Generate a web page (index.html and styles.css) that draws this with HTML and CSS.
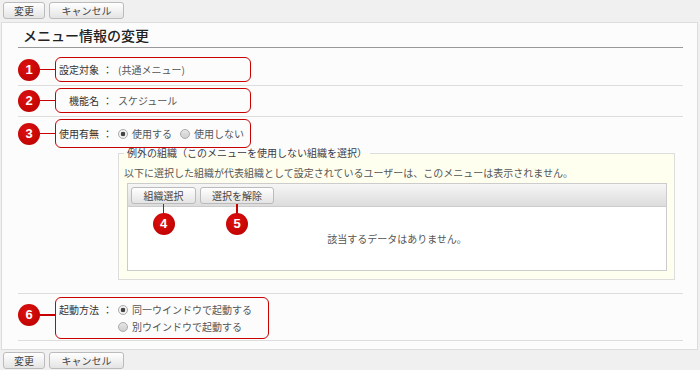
FILE: index.html
```html
<!DOCTYPE html>
<html lang="ja">

<head>
    <meta charset="UTF-8" />
    <meta name="viewport" content="width=device-width, initial-scale=1.0" />
    <title>メニュー情報の変更</title>

    <link rel="stylesheet" href="styles.css">
</head>

<body>

    <div class="toolbar">
        <button class="btn btn-save">変更</button>
        <button class="btn btn-cancel">キャンセル</button>
    </div>

    <div class="panel">
        <h2 class="panel-title">メニュー情報の変更</h2>

        <div class="row row-target">
            <div class="line">
                <span class="num">1</span><span class="leader"></span>
                <div class="mark">
                    <span class="label">設定対象</span><span class="colon">：</span>
                    <span class="value">(共通メニュー)</span>
                </div>
            </div>
        </div>

        <div class="row row-name">
            <div class="line">
                <span class="num">2</span><span class="leader"></span>
                <div class="mark">
                    <span class="label">機能名</span><span class="colon">：</span>
                    <span class="value">スケジュール</span>
                </div>
            </div>
        </div>

        <div class="row row-use">
            <div class="line">
                <span class="num">3</span><span class="leader"></span>
                <div class="mark mark-tall">
                    <span class="label">使用有無</span><span class="colon">：</span>
                    <label class="opt"><input type="radio" name="use" checked>使用する</label>
                    <label class="opt"><input type="radio" name="use">使用しない</label>
                </div>
            </div>

            <fieldset class="exclude">
                <legend>例外の組織（このメニューを使用しない組織を選択）</legend>
                <p class="exclude-note">以下に選択した組織が代表組織として設定されているユーザーは、このメニューは表示されません。</p>
                <div class="org-table">
                    <div class="org-head">
                        <div class="pick">
                            <button class="btn btn-pick">組織選択</button>
                            <span class="stem"></span>
                            <span class="num num-below">4</span>
                        </div>
                        <div class="pick">
                            <button class="btn btn-clear">選択を解除</button>
                            <span class="stem"></span>
                            <span class="num num-below">5</span>
                        </div>
                    </div>
                    <div class="org-body">該当するデータはありません。</div>
                </div>
            </fieldset>
        </div>

        <div class="row row-launch">
            <div class="line">
                <span class="num num-high">6</span><span class="leader leader-high"></span>
                <div class="mark mark-wide">
                    <span class="label">起動方法</span><span class="colon">：</span>
                    <div class="opts">
                        <label class="opt"><input type="radio" name="launch" checked>同一ウインドウで起動する</label>
                        <label class="opt"><input type="radio" name="launch">別ウインドウで起動する</label>
                    </div>
                </div>
            </div>
        </div>
    </div>

    <div class="toolbar toolbar-bottom">
        <button class="btn btn-save">変更</button>
        <button class="btn btn-cancel">キャンセル</button>
    </div>

</body>

</html>
```

FILE: styles.css
```css
:root {
    --bg: #f0f0f0;
    --panel: #fcfcfc;
    --line: #dddddd;
    --mark: #c80000;
    --text: #333;
    --soft: #555;
}

* {
    box-sizing: border-box;
}

body {
    margin: 0;
    background: var(--bg);
    color: var(--text);
    font-family: "Noto Sans CJK JP", sans-serif;
    font-size: 10px;
    line-height: 14px;
}

.toolbar {
    display: flex;
    gap: 4px;
    padding: 2px 3px 3px;
}

.toolbar-bottom {
    padding-top: 2px;
}

.btn {
    height: 17px;
    padding: 0;
    border: 1px solid #bbb;
    border-radius: 3px;
    background: linear-gradient(#ffffff, #e4e4e4);
    color: #444;
    font: inherit;
    line-height: 15px;
    cursor: pointer;
}

.btn-save {
    width: 42px;
}

.btn-cancel {
    width: 75px;
}

.panel {
    margin: 0 2px 0 1px;
    background: var(--panel);
    border: 1px solid var(--line);
    padding: 0 14px 8px 16px;
}

.panel-title {
    margin: 0;
    height: 25px;
    padding-left: 5px;
    border-bottom: 1px solid #999;
    font-size: 14px;
    font-weight: 500;
    line-height: 24px;
    color: #222;
}

.row {
    border-bottom: 1px solid var(--line);
}

.row-target {
    padding: 9px 0 3px;
}

.row-name {
    padding: 2px 0 3px;
}

.row-use {
    padding: 2px 0 13px;
}

.row-launch {
    padding: 3px 0 1px;
}

.line {
    display: flex;
    align-items: center;
}

/* annotation markers */
.num {
    display: flex;
    align-items: center;
    justify-content: center;
    width: 22px;
    height: 22px;
    border-radius: 50%;
    background: radial-gradient(circle at 40% 35%, #dd1010, #b80000);
    color: #fff;
    font-family: "Liberation Sans", sans-serif;
    font-size: 13px;
    font-weight: bold;
    flex-shrink: 0;
}

.leader {
    width: 15px;
    height: 1.5px;
    background: var(--mark);
}

.num-high,
.leader-high {
    margin-bottom: 6px;
}

.mark {
    display: flex;
    align-items: center;
    width: 196px;
    height: 25px;
    border: 1.5px solid var(--mark);
    border-radius: 6px;
    padding-left: 1px;
}

.mark-tall {
    height: 29px;
}

.mark-wide {
    width: 214px;
    height: 42px;
    align-items: flex-start;
    padding-top: 3px;
}

.mark-wide .label,
.mark-wide .colon {
    line-height: 17px;
}

.label {
    width: 42px;
    text-align: right;
    white-space: nowrap;
    color: var(--text);
}

.colon {
    width: 17px;
    text-align: center;
    color: var(--text);
}

.value {
    margin-left: 2px;
    color: var(--soft);
}

.opt {
    display: flex;
    align-items: center;
    color: var(--soft);
    margin-left: 2px;
    line-height: 17px;
    white-space: nowrap;
}

.opt + .opt {
    margin-left: 8px;
}

.opts .opt + .opt {
    margin-left: 2px;
}

.opt input {
    appearance: none;
    width: 10px;
    height: 10px;
    margin: 0 4px 0 0;
    border: 1px solid #aaa;
    border-radius: 50%;
    background: linear-gradient(#e6e6e6, #cfcfcf);
}

.opt input:checked {
    background: radial-gradient(circle, #444 0 2px, #f2f2f2 2.6px);
}

/* exception organisations */
.exclude {
    margin: 0 8px 0 100px;
    padding: 8px 7px 8px 5px;
    border: 1px solid var(--line);
    background: #fffff0;
}

.exclude legend {
    padding: 0 3px;
    line-height: 10px;
    color: #3a3a4a;
}

.exclude-note {
    margin: 0 0 3px;
    color: var(--soft);
    white-space: nowrap;
}

.org-table {
    margin-left: 3px;
    border: 1px solid #ccc;
    background: #fff;
}

.org-head {
    display: flex;
    gap: 4px;
    height: 23px;
    padding: 3px 0 0 3px;
    border-bottom: 1px solid #ccc;
    background: linear-gradient(#f6f6f6, #dcdcdc);
}

.pick {
    position: relative;
}

.btn-pick {
    width: 65px;
}

.btn-clear {
    width: 74px;
}

.stem {
    position: absolute;
    top: 17px;
    left: 50%;
    width: 1.5px;
    height: 10px;
    margin-left: -1px;
    background: var(--mark);
}

.num-below {
    position: absolute;
    top: 26px;
    left: 50%;
    margin-left: -11px;
}

.org-body {
    display: flex;
    align-items: center;
    justify-content: center;
    height: 63px;
    color: var(--soft);
}
```
